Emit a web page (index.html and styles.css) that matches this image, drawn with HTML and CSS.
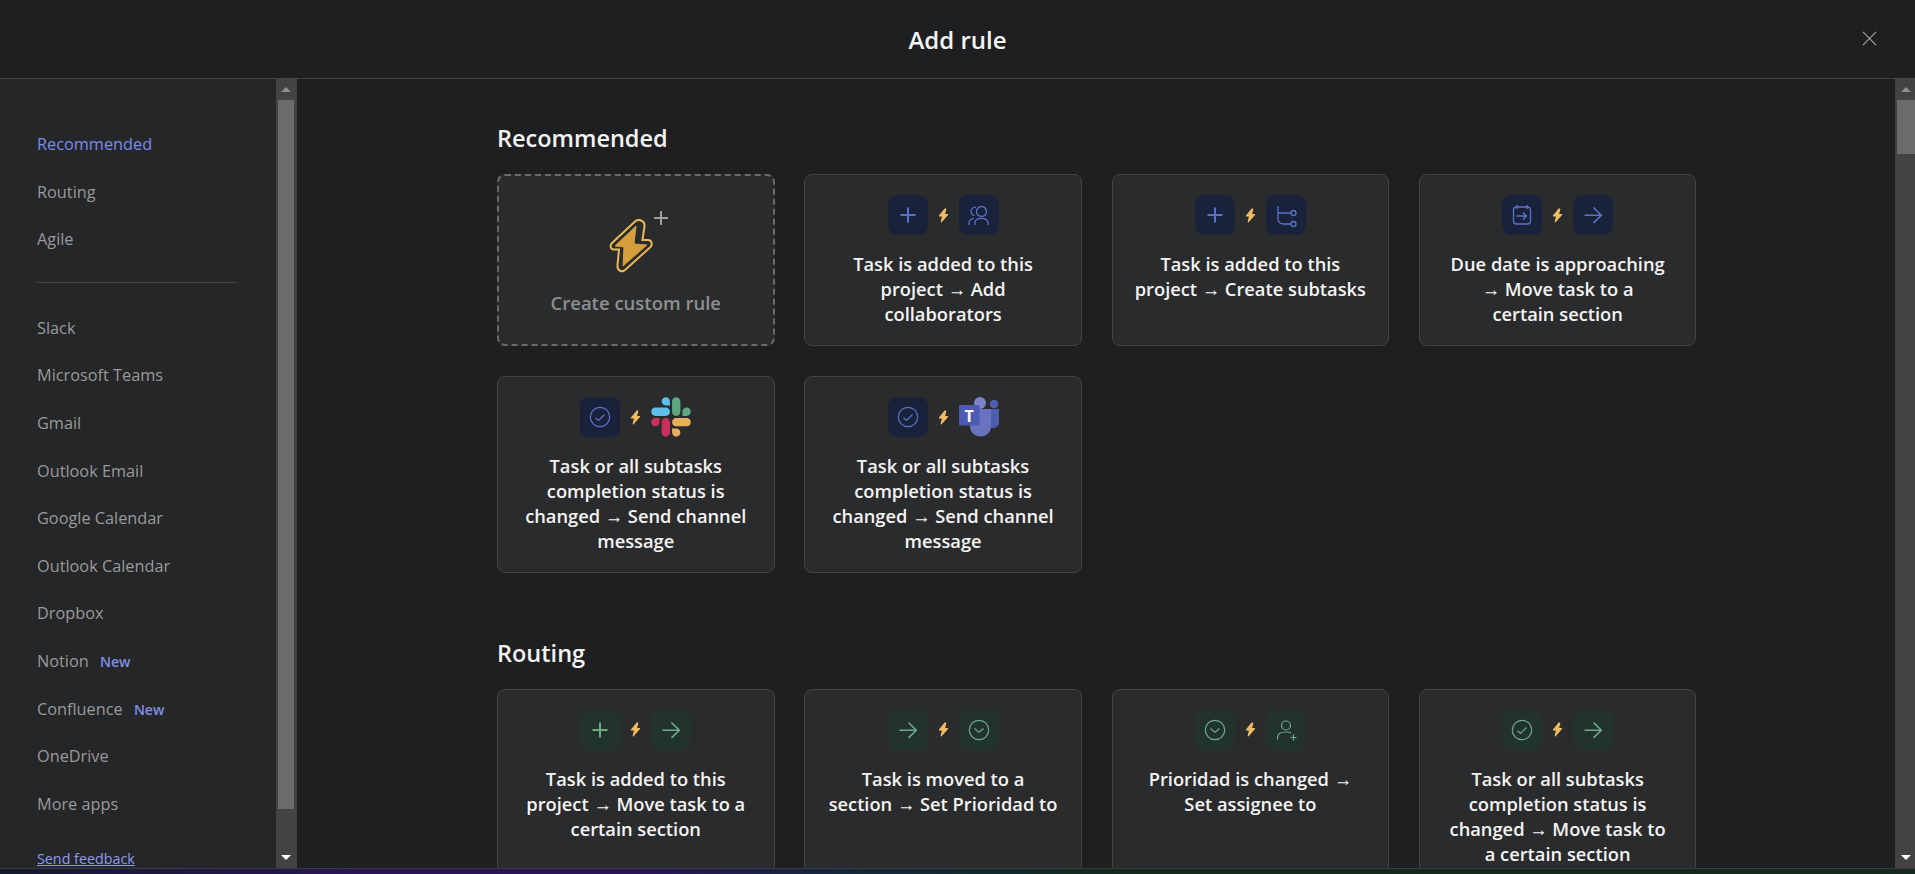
FILE: index.html
```html
<!DOCTYPE html>
<html lang="en">
<head>
<meta charset="utf-8">
<title>Add rule</title>
<link rel="stylesheet" href="styles.css">
</head>
<body>
<svg class="defs" width="0" height="0" aria-hidden="true">
  <symbol id="bolt" viewBox="0 0 12 16"><path d="M7.500 1 1.500 8.500H5L3.500 15 10.500 7H7L8.500 1Z" fill="#f0bd62" stroke="#f0bd62" stroke-width="1.200" stroke-linejoin="round"/></symbol>
  <symbol id="i-plus" viewBox="0 0 40 40"><path d="M20 12.500v15M12.500 20h15" fill="none" stroke="currentColor" stroke-width="2"/></symbol>
  <symbol id="i-arrow" viewBox="0 0 40 40"><path d="M11.500 20.200h16.500M20.500 12.500l7.800 7.700-7.800 7.700" fill="none" stroke="currentColor" stroke-width="1.600"/></symbol>
  <symbol id="i-people" viewBox="0 0 40 40"><g fill="none" stroke="currentColor" stroke-width="1.300"><circle cx="22.500" cy="16.500" r="5"/><path d="M15.800 30v-1.500c0-3 2.500-5.200 6.700-5.200s6.700 2.200 6.700 5.200V30M16.800 12.500c-2.800-.5-4.800 1.500-4.800 4 0 2 1.300 3.500 3.400 4M10 30v-1.500c0-2.800 1.700-4.700 4.800-5.200"/></g></symbol>
  <symbol id="i-sub" viewBox="0 0 40 40"><g fill="none" stroke="currentColor" stroke-width="1.300"><path d="M12 11v12.500c0 3.500 2.500 5.500 6 5.500h7M12 18h13"/><circle cx="27.500" cy="18" r="2.500"/><circle cx="27.500" cy="29" r="2.500"/></g></symbol>
  <symbol id="i-due" viewBox="0 0 40 40"><g fill="none" stroke="currentColor" stroke-width="1.300"><rect x="11.500" y="12" width="17" height="17" rx="3"/><path d="M15 10v4M25 10v4M14.500 21h10M21 17.500l3.500 3.500-3.500 3.500"/></g></symbol>
  <symbol id="i-check" viewBox="0 0 40 40"><g fill="none" stroke="currentColor" stroke-width="1.200"><circle cx="20" cy="20" r="9.700"/><path d="M15.500 20.800l3 2.700 6-6"/></g></symbol>
  <symbol id="i-drop" viewBox="0 0 40 40"><g fill="none" stroke="currentColor" stroke-width="1.200"><circle cx="20" cy="20" r="9.700"/><path d="M15.500 18.500l4.500 3.800 4.500-3.800"/></g></symbol>
  <symbol id="i-assign" viewBox="0 0 40 40"><g fill="none" stroke="currentColor" stroke-width="1.200"><circle cx="20" cy="15.500" r="4.500"/><path d="M11.500 29.500v-2c0-3.500 3-5.500 8.500-5.500 2 0 3.600.3 5 .9M24.500 27.500h6M27.500 24.500v6"/></g></symbol>
</svg>

<header class="topbar">
  <h1 class="title">Add rule</h1>
  <svg class="close" viewBox="0 0 16 16" aria-hidden="true"><path d="M1 1l14 14M15 1 1 15" fill="none" stroke="currentColor" stroke-width="1.300"/></svg>
</header>

<div class="body">
  <aside class="side">
    <nav class="side-nav">
      <a class="nav-item active">Recommended</a>
      <a class="nav-item">Routing</a>
      <a class="nav-item">Agile</a>
      <hr class="nav-rule">
      <a class="nav-item">Slack</a>
      <a class="nav-item">Microsoft Teams</a>
      <a class="nav-item">Gmail</a>
      <a class="nav-item">Outlook Email</a>
      <a class="nav-item">Google Calendar</a>
      <a class="nav-item">Outlook Calendar</a>
      <a class="nav-item">Dropbox</a>
      <a class="nav-item">Notion <b class="new">New</b></a>
      <a class="nav-item">Confluence <b class="new">New</b></a>
      <a class="nav-item">OneDrive</a>
      <a class="nav-item">More apps</a>
      <a class="feedback">Send feedback</a>
    </nav>
  </aside>
  <div class="bar side-bar">
    <span class="arrow up"></span>
    <span class="thumb thumb-side"></span>
    <span class="arrow down"></span>
  </div>

  <main class="main">
    <section class="section">
      <h2 class="heading">Recommended</h2>
      <div class="grid">
        <div class="card custom">
          <div class="custom-icon">
            <svg class="big-bolt" viewBox="0 0 44 54" aria-hidden="true">
              <path d="M26 2.500 3 24C.5 26.500 1.500 30.500 5 30.500H10L8.500 46C8 51.500 12.500 54 16 51L41.500 28C44 25.500 42.500 21 39 21H33.500L35.500 7C36 2 30-1 26 2.500Z" fill="none" stroke="#eab856" stroke-width="2"/>
              <path d="M27 7 6 27 15 28 14 47 38 26 25 25Z" fill="#d49f3c" stroke="#d49f3c" stroke-width="1" stroke-linejoin="round"/>
            </svg>
            <svg class="small-plus" viewBox="0 0 16 16" aria-hidden="true"><path d="M8 1v14M1 8h14" fill="none" stroke="currentColor" stroke-width="2"/></svg>
          </div>
          <p class="custom-label">Create custom rule</p>
        </div>

        <div class="card">
          <div class="icons"><span class="chip blue"><svg class="ico"><use href="#i-plus"/></svg></span><svg class="bolt"><use href="#bolt"/></svg><span class="chip blue"><svg class="ico"><use href="#i-people"/></svg></span></div>
          <p class="label">Task is added to this project → Add collaborators</p>
        </div>
        <div class="card">
          <div class="icons"><span class="chip blue"><svg class="ico"><use href="#i-plus"/></svg></span><svg class="bolt"><use href="#bolt"/></svg><span class="chip blue"><svg class="ico"><use href="#i-sub"/></svg></span></div>
          <p class="label">Task is added to this project → Create subtasks</p>
        </div>
        <div class="card">
          <div class="icons"><span class="chip blue"><svg class="ico"><use href="#i-due"/></svg></span><svg class="bolt"><use href="#bolt"/></svg><span class="chip blue"><svg class="ico"><use href="#i-arrow"/></svg></span></div>
          <p class="label">Due date is approaching<br>→ Move task to a<br>certain section</p>
        </div>

        <div class="card">
          <div class="icons"><span class="chip blue"><svg class="ico"><use href="#i-check"/></svg></span><svg class="bolt"><use href="#bolt"/></svg>
            <svg class="logo" viewBox="0 0 127 127" aria-hidden="true">
              <path d="M27.200 80c0 7.300-5.900 13.200-13.200 13.200S.8 87.300.8 80s5.900-13.200 13.200-13.200h13.200V80zm6.600 0c0-7.300 5.900-13.200 13.200-13.200s13.200 5.900 13.200 13.200v33c0 7.300-5.900 13.200-13.200 13.200s-13.200-5.900-13.200-13.200V80z" fill="#cb2f5c"/>
              <path d="M47 27c-7.300 0-13.200-5.900-13.200-13.200S39.700.6 47 .6s13.200 5.900 13.200 13.200V27H47zm0 6.700c7.300 0 13.200 5.900 13.200 13.200s-5.900 13.200-13.200 13.200H13.900C6.600 60.100.7 54.200.7 46.900s5.900-13.200 13.200-13.200H47z" fill="#5cc0ea"/>
              <path d="M99.900 46.900c0-7.300 5.900-13.200 13.200-13.200s13.200 5.900 13.200 13.200-5.900 13.200-13.200 13.200H99.900V46.900zm-6.600 0c0 7.300-5.900 13.200-13.200 13.200s-13.200-5.900-13.200-13.200V13.800C66.900 6.500 72.800.6 80.100.6s13.200 5.900 13.200 13.200v33.100z" fill="#5fa780"/>
              <path d="M80.100 99.800c7.300 0 13.200 5.900 13.200 13.200s-5.900 13.200-13.200 13.200-13.200-5.900-13.200-13.200V99.800h13.200zm0-6.600c-7.300 0-13.200-5.900-13.200-13.200s5.900-13.200 13.200-13.200h33.100c7.300 0 13.200 5.900 13.200 13.200s-5.900 13.200-13.200 13.200H80.100z" fill="#e8b158"/>
            </svg>
          </div>
          <p class="label">Task or all subtasks completion status is changed → Send channel message</p>
        </div>
        <div class="card">
          <div class="icons"><span class="chip blue"><svg class="ico"><use href="#i-check"/></svg></span><svg class="bolt"><use href="#bolt"/></svg>
            <svg class="logo" viewBox="0 0 40 40" aria-hidden="true">
              <circle cx="35" cy="7" r="4.300" fill="#4e5cb0"/>
              <path d="M28 12h12v13c0 3.500-2.500 6-6 6s-6-2.500-6-6Z" fill="#4e5cb0"/>
              <circle cx="21" cy="6" r="6" fill="#7b83c9"/>
              <path d="M11 12h21v17c0 6-4.500 10.500-10.500 10.500S11 35 11 29Z" fill="#6a73c2"/>
              <rect x="0" y="8" width="20.500" height="20.500" rx="1.500" fill="#4d5ab2"/>
              <text x="10.200" y="24.500" class="teams-t">T</text>
            </svg>
          </div>
          <p class="label">Task or all subtasks completion status is changed → Send channel message</p>
        </div>
      </div>
    </section>

    <section class="section routing">
      <h2 class="heading">Routing</h2>
      <div class="grid">
        <div class="card">
          <div class="icons"><span class="chip green"><svg class="ico"><use href="#i-plus"/></svg></span><svg class="bolt"><use href="#bolt"/></svg><span class="chip green"><svg class="ico"><use href="#i-arrow"/></svg></span></div>
          <p class="label">Task is added to this project → Move task to a certain section</p>
        </div>
        <div class="card">
          <div class="icons"><span class="chip green"><svg class="ico"><use href="#i-arrow"/></svg></span><svg class="bolt"><use href="#bolt"/></svg><span class="chip green"><svg class="ico"><use href="#i-drop"/></svg></span></div>
          <p class="label">Task is moved to a<br>section → Set Prioridad to</p>
        </div>
        <div class="card">
          <div class="icons"><span class="chip green"><svg class="ico"><use href="#i-drop"/></svg></span><svg class="bolt"><use href="#bolt"/></svg><span class="chip green"><svg class="ico"><use href="#i-assign"/></svg></span></div>
          <p class="label">Prioridad is changed →<br>Set assignee to</p>
        </div>
        <div class="card">
          <div class="icons"><span class="chip green"><svg class="ico"><use href="#i-check"/></svg></span><svg class="bolt"><use href="#bolt"/></svg><span class="chip green"><svg class="ico"><use href="#i-arrow"/></svg></span></div>
          <p class="label">Task or all subtasks completion status is changed → Move task to<br>a certain section</p>
        </div>
      </div>
    </section>
  </main>
  <div class="bar main-bar">
    <span class="arrow up"></span>
    <span class="thumb thumb-main"></span>
    <span class="arrow down"></span>
  </div>
</div>
<div class="taskbar"></div>
</body>
</html>
```
FILE: styles.css
```css
* { box-sizing: border-box; }
html, body { margin: 0; height: 100%; overflow: hidden; }
body {
  display: flex;
  flex-direction: column;
  height: 874px;
  background: #1e1f21;
  color: #f5f4f3;
  font-family: "Open Sans", "Noto Sans", sans-serif;
}
.defs { position: absolute; }

.topbar {
  flex: 0 0 79px;
  display: flex;
  align-items: center;
  justify-content: center;
  background: #1e1f21;
  border-bottom: 1px solid #424344;
  position: relative;
}
.title { margin: 0; font-size: 24px; font-weight: 600; color: #f5f4f3; }
.close { position: absolute; left: 1862px; top: 31px; width: 15px; height: 15px; color: #a2a0a2; }

.body { flex: 1; display: flex; min-height: 0; }

.side { flex: 0 0 276px; background: #252628; padding: 42px 0 0 37px; overflow: hidden; }
.side-nav { display: flex; flex-direction: column; align-items: flex-start; }
.nav-item { height: 47.6px; line-height: 47.6px; font-size: 16.3px; color: #9a9a9b; white-space: nowrap; }
.nav-item.active { color: #7a8cec; }
.nav-rule { width: 200px; border: 0; border-top: 1px solid #424344; margin: 18.500px 0 21.500px; }
.new { margin-left: 7px; font-size: 14px; font-weight: 600; color: #8090e4; }
.feedback { margin-top: 22px; font-size: 14.300px; color: #8d9bee; text-decoration: underline; line-height: 18px; }

.bar { display: flex; flex-direction: column; background: #434343; }
.side-bar { flex: 0 0 21px; padding: 0 3px 0 2px; }
.main-bar { flex: 0 0 20px; padding: 0 0 0 2px; }
.arrow { flex: 0 0 21px; display: flex; align-items: center; justify-content: center; }
.arrow::before { content: ""; border-left: 5px solid transparent; border-right: 5px solid transparent; }
.up::before { border-bottom: 5px solid #8f8f8f; }
.down::before { border-top: 5px solid #ffffff; }
.thumb { background: #6b6b6b; display: block; margin-bottom: auto; }
.thumb-side { flex: 0 0 709px; }
.thumb-main { flex: 0 0 54px; }

.main { flex: 1; min-width: 0; overflow: hidden; padding: 43px 0 0 200px; background: #1e1f21; }
.section { width: 1200px; }
.routing { margin-top: 63.500px; }
.heading { margin: 0 0 20px; font-size: 23.500px; line-height: 32px; font-weight: 600; color: #f5f4f3; }
.grid { display: grid; grid-template-columns: repeat(4, 277.500px); column-gap: 29.800px; row-gap: 30px; }

.card {
  background: #2a2b2d;
  border: 1px solid #424344;
  border-radius: 8px;
  padding: 20px 20px 19px;
  display: flex;
  flex-direction: column;
  align-items: center;
  text-align: center;
}
.icons { display: flex; align-items: center; gap: 10px; height: 40px; margin-bottom: 16px; }
.chip { width: 40px; height: 40px; border-radius: 9px; display: flex; }
.chip.blue { background: #19223a; color: #5a73c8; }
.chip.green { background: #22332f; color: #6fa98a; }
.ico { width: 40px; height: 40px; }
.bolt { width: 11px; height: 15px; }
.logo { width: 40px; height: 40px; }
.teams-t { font-size: 16px; font-weight: 700; fill: #fff; text-anchor: middle; }
.label { margin: 0; font-size: 18.300px; line-height: 25px; font-weight: 600; color: #f5f4f3; }

.custom { border: 2px dashed #6b6b6d; padding-top: 43px; }
.custom-icon { position: relative; width: 44px; height: 54px; margin-right: 10px; }
.big-bolt { width: 44px; height: 54px; display: block; }
.small-plus { position: absolute; left: 44px; top: -9px; width: 16px; height: 16px; color: #a2a0a2; }
.custom-label { margin: 17px 0 0; font-size: 18.500px; line-height: 25px; font-weight: 600; color: #8f8f90; }

.taskbar {
  flex: 0 0 6px;
  border-top: 1px solid #3c3d3e;
  background: linear-gradient(90deg, #151a2f 0, #2a1459 20%, #2a1459 33%, #12283a 45%, #14291b 60%, #14291b 100%);
}
```
